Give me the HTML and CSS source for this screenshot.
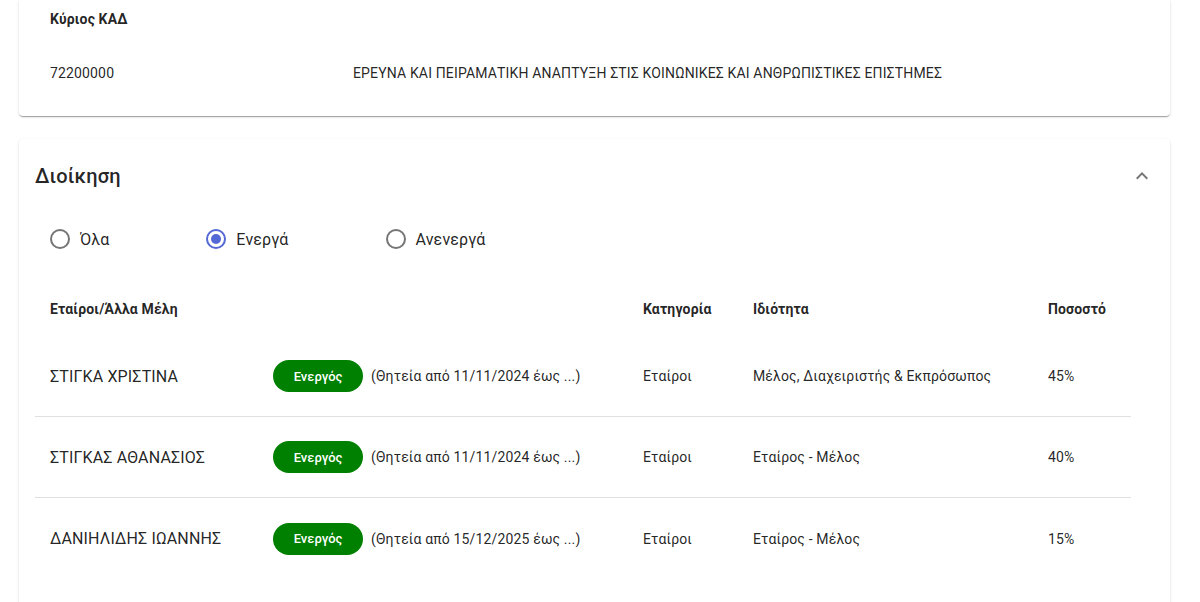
FILE: index.html
```html
<!DOCTYPE html>
<html lang="el">
<head>
<meta charset="utf-8">
<title>Διοίκηση</title>
<link rel="stylesheet" href="styles.css">
</head>
<body>
<div class="page">
  <section class="card card-kad">
    <div class="kad-grid">
      <div class="kad-head">Κύριος ΚΑΔ</div>
      <div class="kad-head"></div>
      <div class="kad-cell">72200000</div>
      <div class="kad-cell">ΕΡΕΥΝΑ ΚΑΙ ΠΕΙΡΑΜΑΤΙΚΗ ΑΝΑΠΤΥΞΗ ΣΤΙΣ ΚΟΙΝΩΝΙΚΕΣ ΚΑΙ ΑΝΘΡΩΠΙΣΤΙΚΕΣ ΕΠΙΣΤΗΜΕΣ</div>
    </div>
  </section>

  <section class="card card-admin">
    <div class="summary">
      <h2 class="title">Διοίκηση</h2>
      <svg class="chevron" viewBox="0 0 24 24" width="24" height="24"><path d="M12 8l-6 6 1.41 1.41L12 10.83l4.59 4.58L18 14z"/></svg>
    </div>
    <div class="radios">
      <label class="radio"><span class="circle"></span><span class="rlabel">Όλα</span></label>
      <label class="radio checked"><span class="circle"><span class="dot"></span></span><span class="rlabel">Ενεργά</span></label>
      <label class="radio"><span class="circle"></span><span class="rlabel">Ανενεργά</span></label>
    </div>
    <div class="table">
      <div class="row head">
        <div class="cell">Εταίροι/Άλλα Μέλη</div>
        <div class="cell">Κατηγορία</div>
        <div class="cell">Ιδιότητα</div>
        <div class="cell">Ποσοστό</div>
      </div>
      <div class="row body">
        <div class="cell member"><span class="name">ΣΤΙΓΚΑ ΧΡΙΣΤΙΝΑ</span><span class="badge">Ενεργός</span><span class="term">(Θητεία από 11/11/2024 έως ...)</span></div>
        <div class="cell">Εταίροι</div>
        <div class="cell">Μέλος, Διαχειριστής &amp; Εκπρόσωπος</div>
        <div class="cell">45%</div>
      </div>
      <div class="row body">
        <div class="cell member"><span class="name">ΣΤΙΓΚΑΣ ΑΘΑΝΑΣΙΟΣ</span><span class="badge">Ενεργός</span><span class="term">(Θητεία από 11/11/2024 έως ...)</span></div>
        <div class="cell">Εταίροι</div>
        <div class="cell">Εταίρος - Μέλος</div>
        <div class="cell">40%</div>
      </div>
      <div class="row body last">
        <div class="cell member"><span class="name">ΔΑΝΙΗΛΙΔΗΣ ΙΩΑΝΝΗΣ</span><span class="badge">Ενεργός</span><span class="term">(Θητεία από 15/12/2025 έως ...)</span></div>
        <div class="cell">Εταίροι</div>
        <div class="cell">Εταίρος - Μέλος</div>
        <div class="cell">15%</div>
      </div>
    </div>
  </section>
</div>
</body>
</html>
```
FILE: styles.css
```css
* { box-sizing: border-box; }
html, body { margin: 0; padding: 0; background: #fff; }
body {
  font-family: Roboto, "Noto Sans", "Liberation Sans", sans-serif;
  color: rgba(0,0,0,0.87);
  overflow: hidden;
  height: 602px;
}
.page {
  padding: 0 30px 0 19px;
  display: flex;
  flex-direction: column;
  gap: 23px;
}
.card {
  background: #fff;
  border-radius: 4px;
  box-shadow: 0 2px 1px -1px rgba(0,0,0,0.2), 0 1px 1px 0 rgba(0,0,0,0.14), 0 1px 3px 0 rgba(0,0,0,0.12);
}
.card-kad {
  border-top-left-radius: 0;
  border-top-right-radius: 0;
  padding: 0 16px 8px;
}
.kad-grid {
  display: grid;
  grid-template-columns: 303px 1fr;
}
.kad-head {
  height: 38px;
  padding: 0 15px;
  display: flex;
  align-items: center;
  font-size: 14px;
  font-weight: 700;
  letter-spacing: 0.15px;
}
.kad-cell {
  height: 70px;
  padding: 0 15px;
  display: flex;
  align-items: center;
  font-size: 14px;
  letter-spacing: 0.15px;
}
.card-admin {
  padding: 0 16px;
  min-height: 500px;
}
.summary {
  height: 74px;
  display: flex;
  align-items: center;
  justify-content: space-between;
}
.title {
  margin: 0;
  font-size: 20px;
  font-weight: 500;
  letter-spacing: 0.15px;
}
.chevron { fill: rgba(0,0,0,0.54); }
.radios {
  display: flex;
  padding: 16px 0 0 15px;
  gap: 97px;
  height: 69px;
}
.radio {
  display: flex;
  align-items: center;
  gap: 10px;
  height: 20px;
  font-size: 16px;
  letter-spacing: 0.15px;
}
.circle {
  width: 20px;
  height: 20px;
  border-radius: 50%;
  border: 2px solid #757575;
  display: flex;
  align-items: center;
  justify-content: center;
}
.checked .circle { border-color: #5468d6; }
.dot {
  width: 10px;
  height: 10px;
  border-radius: 50%;
  background: #5468d6;
}
.table { width: 1096px; }
.row {
  display: grid;
  grid-template-columns: 592px 110px 295px 99px;
}
.row.head { height: 54px; }
.row.head .cell { font-weight: 700; font-size: 14px; }
.row.body { height: 81px; border-bottom: 1px solid #e0e0e0; }
.row.body.last { border-bottom: none; }
.cell {
  display: flex;
  align-items: center;
  padding: 0 16px;
  font-size: 14px;
  letter-spacing: 0.15px;
}
.row .cell:first-child { padding-left: 15px; }
.name {
  width: 223px;
  font-size: 16px;
}
.badge {
  width: 90px;
  height: 32px;
  border-radius: 16px;
  background: #008000;
  color: #fff;
  font-size: 13px;
  font-weight: 500;
  letter-spacing: 0;
  display: flex;
  align-items: center;
  justify-content: center;
  margin-right: 8px;
}
.term { font-size: 14px; }
```
